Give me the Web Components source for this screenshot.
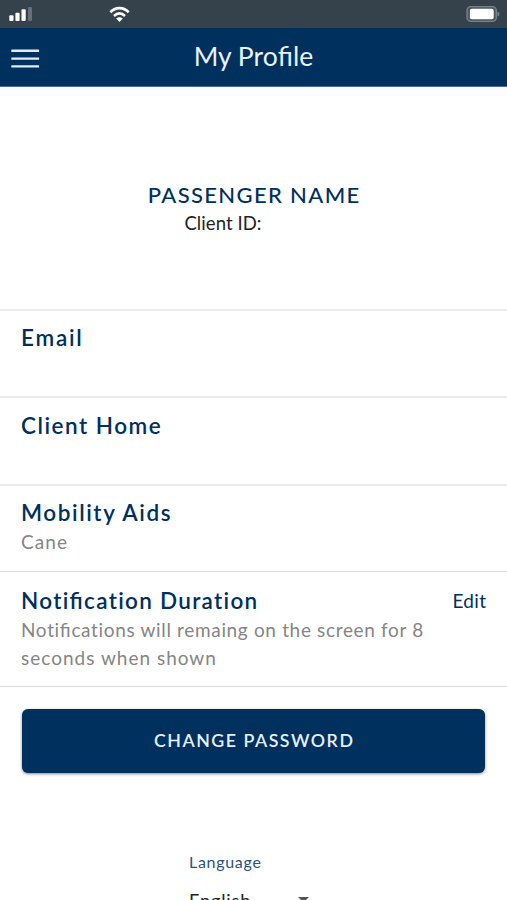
<!DOCTYPE html>
<html lang="en"><head><meta charset="utf-8"><title>My Profile</title>
<style>html,body{margin:0;height:900px;overflow:hidden;background:#fff}body{font-family:Lato,"Open Sans",sans-serif;color:#00305d}</style></head>
<body>
<profile-screen></profile-screen>
<script>
const define=(name,html)=>customElements.define(name,class extends HTMLElement{
  constructor(){super();const t=document.createElement('template');t.innerHTML=html;this.attachShadow({mode:'open'}).append(t.content.cloneNode(true));}
});

// Single line of text; --ls sets its tracking
define('text-line',`<style>:host{display:block;white-space:nowrap;letter-spacing:var(--ls,0);font-feature-settings:"liga" 0;margin-right:calc(-1*var(--ls,0px))}::slotted(span){font-feature-settings:"liga" 1}</style><slot></slot>`);

define('status-bar',`<style>:host{display:flex;height:28px;background:#36424b;box-sizing:border-box;padding:6px 7px 0 9px}
svg{display:block;flex:none}.wifi{margin-left:76px}.bat{margin-left:auto}</style>
<svg width="24" height="16"><g fill="#fff"><rect x="0.3" y="9.3" width="4.2" height="5.7" rx="1"/><rect x="6.4" y="6.8" width="4.2" height="8.2" rx="1"/><rect x="12.5" y="3.3" width="4.2" height="11.7" rx="1"/></g><rect x="19" y="1" width="4" height="14" rx="1" fill="#65707a"/></svg>
<svg class="wifi" width="22" height="17" viewBox="0 0 22 17"><g fill="none" stroke="#fff" stroke-width="2.7"><path d="M1.3 6.2C6.8.8 14.2.8 19.7 6.2"/><path d="M5 9.9c3.5-3.2 7.5-3.2 11 0"/></g><path d="M7.2 12.5q3.3-2.4 6.6 0L10.5 16z" fill="#fff"/></svg>
<svg class="bat" width="34" height="17"><rect x="1" y=".6" width="29.3" height="14.8" rx="4" fill="#4c5760" stroke="#78828a" stroke-width="1.4"/><rect x="3.9" y="2.8" width="23.8" height="10.4" rx="2" fill="#fff"/><path d="M31.5 5.5q2 .5 2 2.5t-2 2.5z" fill="#78828a"/></svg>`);

define('nav-bar',`<style>:host{display:grid;grid-template-columns:52px 1fr 52px;height:59px;background:#00305d;color:#eaf2fc;box-sizing:border-box;border-bottom:1px solid #486d92}
svg{display:block;margin:20px 0 0 11px}div{display:flex;justify-content:center;font-size:26.5px;line-height:40px;padding-top:7.5px}</style>
<svg width="29" height="22" fill="#e2edf9"><rect x=".3" y="1.6" width="27.8" height="2.3" rx=".5"/><rect x=".3" y="9.4" width="27.8" height="2.3" rx=".5"/><rect x=".3" y="17.2" width="27.8" height="2.3" rx=".5"/></svg><div><slot></slot></div>`);

define('client-card',`<style>:host{display:flex;flex-direction:column;align-items:center;height:222px;box-sizing:border-box;padding-top:93px}
.name{font-size:22px;font-weight:500;line-height:30px;--ls:1.35px}.id{font-size:18.5px;line-height:26px;color:#222;--ls:.08px;align-self:flex-start;margin-left:184.4px}</style>
<text-line class="name">PASSENGER NAME</text-line><text-line class="id">Client ID:</text-line>`);

define('profile-row',`<style>:host{display:block;box-sizing:border-box;border-top:var(--line,2px solid #ebebed);padding:var(--top,12px) 21px 0 21px;height:var(--h,87px)}
header{display:flex;justify-content:space-between;font-size:22.5px;font-weight:600;line-height:30px}
::slotted([slot=action]){font-size:19px;font-weight:400;line-height:30px}
section{font-size:19px;line-height:28px;color:#858585}</style>
<header><slot name="title"></slot><slot name="action"></slot></header><section><slot></slot></section>`);

define('primary-button',`<style>:host{display:block;padding:22px 22px 0}
button{display:flex;justify-content:center;align-items:center;width:100%;height:64px;border:0;border-radius:6px;background:#00305d;color:#e6effb;font:600 17.8px/28px Lato,"Open Sans",sans-serif;box-shadow:0 1px 3px rgba(0,20,50,.5);padding:0 0 2px}</style><button><slot></slot></button>`);

define('language-picker',`<style>:host{display:block;width:120px;margin:78px 0 0 189px}
.label{font-size:16px;line-height:22px;color:#2b527b;--ls:.7px}.value{display:flex;justify-content:space-between;align-items:center;margin-top:14px;font-size:18.2px;line-height:26px;color:#222;--ls:.8px}
svg{display:block}</style>
<text-line class="label">Language</text-line><div class="value"><text-line>English</text-line><svg width="11" height="6"><path d="M0 0h11L5.5 5.5z" fill="#555"/></svg></div>`);

define('profile-screen',`<style>:host{display:block;width:507px;height:900px;overflow:hidden;background:#fff}</style>
<status-bar></status-bar>
<nav-bar><text-line style="--ls:.05px">My Pro<span>fi</span>le</text-line></nav-bar>
<client-card></client-card>
<profile-row><text-line slot="title" style="--ls:1.75px">Email</text-line></profile-row>
<profile-row style="--h:88px;--top:13px"><text-line slot="title" style="--ls:1.5px">Client Home</text-line></profile-row>
<profile-row><text-line slot="title" style="--ls:1.58px">Mobility Aids</text-line><text-line style="--ls:1.1px">Cane</text-line></profile-row>
<profile-row style="--h:115px;--line:1px solid #dcdcde;--top:14px"><text-line slot="title" style="--ls:1.3px">Noti<span>fi</span>cation Duration</text-line><text-line slot="action" style="--ls:.3px">Edit</text-line>
<text-line style="--ls:.66px">Noti<span>fi</span>cations will remaing on the screen for 8</text-line><text-line style="--ls:1px">seconds when shown</text-line></profile-row>
<div style="border-top:1px solid #dcdcde"></div>
<primary-button><text-line style="--ls:1.5px">CHANGE PASSWORD</text-line></primary-button>
<language-picker></language-picker>`);
</script></body></html>
